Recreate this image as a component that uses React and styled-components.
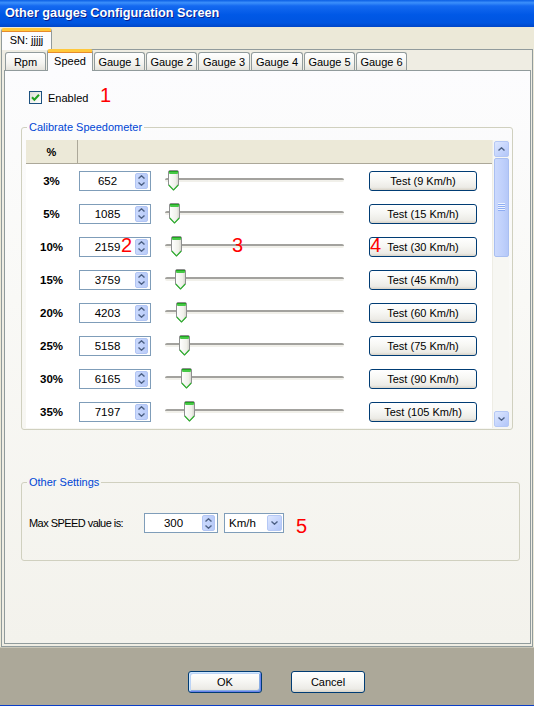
import React from "react";
import styled, { createGlobalStyle, css } from "styled-components";

const GlobalStyle = createGlobalStyle`
  html, body {
    margin: 0;
    padding: 0;
    background: #ECE9D8;
    overflow: hidden;
  }
  * { box-sizing: border-box; }
`;

const rows = [
  { pct: "3%", value: 652, speed: 9 },
  { pct: "5%", value: 1085, speed: 15 },
  { pct: "10%", value: 2159, speed: 30 },
  { pct: "15%", value: 3759, speed: 45 },
  { pct: "20%", value: 4203, speed: 60 },
  { pct: "25%", value: 5158, speed: 75 },
  { pct: "30%", value: 6165, speed: 90 },
  { pct: "35%", value: 7197, speed: 105 },
];

const tabs = [
  { label: "Rpm", width: 41 },
  { label: "Speed", width: 46, active: true },
  { label: "Gauge 1", width: 51 },
  { label: "Gauge 2", width: 51 },
  { label: "Gauge 3", width: 52 },
  { label: "Gauge 4", width: 52 },
  { label: "Gauge 5", width: 51 },
  { label: "Gauge 6", width: 51 },
];

const Chevron = ({ up, color = "#4D6185" }) => (
  <svg width="7" height="4" viewBox="0 0 7 4">
    <polyline
      points={up ? "0.5,3.5 3.5,0.8 6.5,3.5" : "0.5,0.5 3.5,3.2 6.5,0.5"}
      fill="none"
      stroke={color}
      strokeWidth="1.4"
    />
  </svg>
);

const Thumb = () => (
  <svg width="11" height="21" viewBox="0 0 11 21">
    <defs>
      <linearGradient id="tb" x1="0" x2="1" y1="0" y2="0">
        <stop offset="0" stopColor="#FFFFFF" />
        <stop offset="0.7" stopColor="#F0F0EA" />
        <stop offset="1" stopColor="#D4D3CC" />
      </linearGradient>
    </defs>
    <path
      d="M0.5 2 Q0.5 0.5 2 0.5 H9 Q10.5 0.5 10.5 2 V15 L5.5 20.2 L0.5 15 Z"
      fill="url(#tb)"
      stroke="#8E8F8F"
    />
    <path d="M0.8 15 L5.5 20 L10.2 15" fill="none" stroke="#2FB32F" strokeWidth="1.1" />
    <rect x="1" y="1" width="9" height="3" rx="1" fill="#47C947" />
    <rect x="1" y="1" width="9" height="1" fill="#21A121" />
  </svg>
);

const Check = () => (
  <svg width="9" height="9" viewBox="0 0 9 9">
    <polyline points="1,4.2 3.4,6.8 8,1.8" fill="none" stroke="#21A121" strokeWidth="2" />
  </svg>
);

const SpinBox = ({ value, width }) => (
  <SpinWrap $width={width}>
    <SpinValue>{value}</SpinValue>
    <SpinButtons>
      <SpinHalf><Chevron up /></SpinHalf>
      <SpinHalf><Chevron /></SpinHalf>
    </SpinButtons>
  </SpinWrap>
);

const Slider = ({ value }) => (
  <SliderBox>
    <Track />
    <ThumbHolder style={{ left: Math.round(1 + (value * 160) / 65535) }}>
      <Thumb />
    </ThumbHolder>
  </SliderBox>
);

export default function App() {
  return (
    <Window>
      <GlobalStyle />
      <TitleBar>Other gauges Configuration Screen</TitleBar>
      <Body>
        <TabRow $outer>
          <Tab $active $width={51}>SN: jjjjj</Tab>
        </TabRow>
        <OuterPanel>
          <TabRow>
            {tabs.map((t) => (
              <Tab key={t.label} $active={t.active} $width={t.width}>
                {t.label}
              </Tab>
            ))}
          </TabRow>
          <InnerPanel>
            <CheckRow>
              <CheckBox><Check /></CheckBox>
              <span>Enabled</span>
            </CheckRow>

            <Group $mt={17} $mr={17} $pad="6px 3px 1px 4px">
              <Legend>Calibrate Speedometer</Legend>
              <GridArea>
                <Table>
                  <HeaderRow>
                    <HeaderCell>%</HeaderCell>
                  </HeaderRow>
                  {rows.map((r) => (
                    <Row key={r.pct}>
                      <PctCell>{r.pct}</PctCell>
                      <SpinBox value={r.value} width={72} />
                      <Slider value={r.value} />
                      <XpButton $width={108}>Test ({r.speed} Km/h)</XpButton>
                    </Row>
                  ))}
                </Table>
                <ScrollBar>
                  <ScrollButton><Chevron up /></ScrollButton>
                  <ScrollThumb>
                    <Grip /><Grip /><Grip /><Grip />
                  </ScrollThumb>
                  <ScrollTrack />
                  <ScrollButton><Chevron /></ScrollButton>
                </ScrollBar>
              </GridArea>
            </Group>

            <Group $mt={46} $mr={10} $pad="24px 6px 27px 4px">
              <Legend>Other Settings</Legend>
              <SettingRow>
                <SettingLabel>Max SPEED value is:</SettingLabel>
                <SpinBox value={300} width={74} />
                <Combo>
                  <ComboText>Km/h</ComboText>
                  <ComboButton><Chevron /></ComboButton>
                </Combo>
              </SettingRow>
            </Group>
          </InnerPanel>
        </OuterPanel>
      </Body>
      <Footer>
        <XpButton $width={74} $default>OK</XpButton>
        <XpButton $width={74}>Cancel</XpButton>
      </Footer>

      <Marker $x={100} $y={85}>1</Marker>
      <Marker $x={121} $y={235}>2</Marker>
      <Marker $x={232} $y={235}>3</Marker>
      <Marker $x={370} $y={235}>4</Marker>
      <Marker $x={296} $y={516}>5</Marker>
    </Window>
  );
}

const Window = styled.div`
  position: relative;
  width: 534px;
  height: 706px;
  display: flex;
  flex-direction: column;
  background: #ECE9D8;
  font-family: "Liberation Sans", Arial, sans-serif;
  font-size: 11px;
  color: #000;
`;

const TitleBar = styled.div`
  height: 27px;
  flex-shrink: 0;
  display: flex;
  align-items: center;
  padding: 0 0 1px 5px;
  color: #fff;
  font-weight: bold;
  font-size: 12.7px;
  text-shadow: 1px 1px 0 #0A1E8C;
  background: linear-gradient(
    180deg,
    #0A5EE4 0%,
    #3B8FFB 10%,
    #1469F0 22%,
    #0058E6 55%,
    #0055E0 85%,
    #0046C8 100%
  );
`;

const Body = styled.div`
  flex: 1;
  display: flex;
  flex-direction: column;
  padding: 1px 1px 0 1px;
  min-height: 0;
`;

const TabRow = styled.div`
  display: flex;
  align-items: flex-end;
  gap: 1px;
  height: ${(p) => (p.$outer ? 21 : 20)}px;
  padding-left: ${(p) => (p.$outer ? 0 : 1)}px;
  flex-shrink: 0;
`;

const Tab = styled.div`
  position: relative;
  width: ${(p) => p.$width}px;
  height: 18px;
  display: flex;
  align-items: center;
  justify-content: center;
  border: 1px solid #919B9C;
  border-bottom: none;
  border-radius: 3px 3px 0 0;
  background: linear-gradient(180deg, #FFFFFF 0%, #F4F4F0 60%, #E4E3DC 100%);
  white-space: nowrap;
  ${(p) =>
    p.$active &&
    css`
      height: 22px;
      margin-bottom: -1px;
      z-index: 1;
      background: #FCFCFE;
      border-top: 3px solid #FFC83C;
      padding-bottom: 2px;
      box-shadow: inset 0 1px 0 #E68B2C;
    `}
`;

const OuterPanel = styled.div`
  flex: 1;
  display: flex;
  flex-direction: column;
  border: 1px solid #919B9C;
  padding: 0 1px 2px 2px;
  background: #EFEDE3;
  min-height: 0;
`;

const InnerPanel = styled.div`
  flex: 1;
  display: flex;
  flex-direction: column;
  border: 1px solid #919B9C;
  background: linear-gradient(180deg, #FCFCFE 0%, #F9F9F6 40%, #F3F2EC 100%);
  min-height: 0;
`;

const CheckRow = styled.label`
  display: flex;
  align-items: center;
  gap: 6px;
  height: 13px;
  margin: 20px 0 0 24px;
`;

const CheckBox = styled.span`
  width: 13px;
  height: 13px;
  display: flex;
  align-items: center;
  justify-content: center;
  border: 1px solid #1C5180;
  background: linear-gradient(135deg, #DCDCD7 0%, #F4F4F0 60%, #FFFFFF 100%);
`;

const Group = styled.fieldset`
  margin: ${(p) => p.$mt}px ${(p) => p.$mr}px 0 16px;
  padding: ${(p) => p.$pad};
  border: 1px solid #D0D0BF;
  border-radius: 3px;
  min-width: 0;
`;

const Legend = styled.legend`
  padding: 0 2px;
  margin-left: 1px;
  color: #0046D5;
  line-height: 13px;
`;

const GridArea = styled.div`
  display: flex;
  height: 288px;
  background: #fff;
`;

const Table = styled.div`
  flex: 1;
  display: flex;
  flex-direction: column;
`;

const HeaderRow = styled.div`
  height: 24px;
  flex-shrink: 0;
  display: flex;
  background: #ECE9D8;
  border-bottom: 1px solid #ACA899;
`;

const HeaderCell = styled.div`
  width: 52px;
  display: flex;
  align-items: center;
  justify-content: center;
  border-right: 1px solid #ACA899;
  font-weight: bold;
`;

const Row = styled.div`
  height: 33px;
  flex-shrink: 0;
  display: flex;
  align-items: center;
`;

const PctCell = styled.div`
  width: 51px;
  text-align: center;
  font-weight: bold;
  font-size: 11.5px;
`;

const SpinWrap = styled.div`
  width: ${(p) => p.$width}px;
  height: 20px;
  margin-left: 2px;
  display: flex;
  border: 1px solid #7F9DB9;
  background: #fff;
`;

const SpinValue = styled.div`
  flex: 1;
  text-align: center;
  line-height: 18px;
  font-size: 11.5px;
`;

const SpinButtons = styled.div`
  width: 13px;
  margin: 1px 2px 1px 0;
  display: flex;
  flex-direction: column;
  border-radius: 2px;
  overflow: hidden;
  background: linear-gradient(90deg, #CAD9FD 0%, #B9CBF8 100%);
  border: 1px solid #B2C5F3;
`;

const SpinHalf = styled.div`
  flex: 1;
  display: flex;
  align-items: center;
  justify-content: center;
`;

const SliderBox = styled.div`
  position: relative;
  width: 179px;
  height: 21px;
  margin-left: 14px;
  display: flex;
  align-items: center;
`;

const Track = styled.div`
  width: 100%;
  height: 4px;
  margin-top: -2px;
  border-top: 2px solid #A3A29E;
  border-radius: 2px;
  background: #F1F0EA;
  box-shadow: 0 1px 0 #fff;
`;

const ThumbHolder = styled.div`
  position: absolute;
  top: 0;
  height: 21px;
  line-height: 0;
`;

const XpButton = styled.button`
  width: ${(p) => p.$width}px;
  height: ${(p) => (p.$width > 100 ? 20 : 22)}px;
  margin-left: ${(p) => (p.$width > 100 ? 25 : 0)}px;
  padding: 0;
  border: 1px solid #003C74;
  border-radius: 3px;
  font-family: "Liberation Sans", Arial, sans-serif;
  font-size: 11px;
  color: #000;
  background: linear-gradient(180deg, #FFFFFF 0%, #F7F7F4 45%, #ECEBE6 85%, #D8D3C8 100%);
  white-space: nowrap;
  ${(p) =>
    p.$default &&
    css`
      box-shadow: inset 1px 1px 0 #CEE7FF, inset -1px -1px 0 #6982EE, inset 2px 2px 0 #BCD4F6, inset -2px -2px 0 #89ADE4;
    `}
`;

const ScrollBar = styled.div`
  width: 17px;
  display: flex;
  flex-direction: column;
  align-items: center;
  padding: 1px 0;
  background: #F7F7F3;
  border-left: 1px solid #EEEDE5;
`;

const ScrollButton = styled.div`
  width: 15px;
  height: 16px;
  flex-shrink: 0;
  display: flex;
  align-items: center;
  justify-content: center;
  border: 1px solid #B5C8F5;
  border-radius: 2px;
  background: linear-gradient(135deg, #DDE7FE 0%, #C3D3FC 60%, #B2C6F8 100%);
`;

const ScrollThumb = styled.div`
  width: 15px;
  height: 99px;
  margin-top: 1px;
  flex-shrink: 0;
  display: flex;
  flex-direction: column;
  align-items: center;
  justify-content: center;
  gap: 1px;
  border: 1px solid #A9BFF1;
  border-radius: 2px;
  background: linear-gradient(90deg, #CBD9FD 0%, #BFD0FB 60%, #B5C8F8 100%);
`;

const Grip = styled.div`
  width: 7px;
  height: 1px;
  background: #8EADF4;
  box-shadow: 0 -1px 0 #EEF4FE;
`;

const ScrollTrack = styled.div`
  flex: 1;
`;

const SettingRow = styled.div`
  display: flex;
  align-items: center;
  height: 20px;
  padding-left: 3px;
`;

const SettingLabel = styled.span`
  width: 113px;
  letter-spacing: -0.55px;
`;

const Combo = styled.div`
  width: 60px;
  height: 20px;
  margin-left: 6px;
  display: flex;
  border: 1px solid #7F9DB9;
  background: #fff;
`;

const ComboText = styled.div`
  flex: 1;
  padding-left: 4px;
  line-height: 18px;
  font-size: 11.5px;
`;

const ComboButton = styled.div`
  width: 15px;
  margin: 1px;
  display: flex;
  align-items: center;
  justify-content: center;
  border: 1px solid #B5C8F5;
  border-radius: 2px;
  background: linear-gradient(135deg, #DDE7FE 0%, #C3D3FC 60%, #B2C6F8 100%);
`;

const Footer = styled.div`
  height: 59px;
  flex-shrink: 0;
  display: flex;
  align-items: flex-start;
  gap: 29px;
  padding: 23px 0 0 188px;
  background: #ACA899;
  border-top: 1px solid #C9C6B8;
  border-bottom: 1px solid #0A3EC8;
`;

const Marker = styled.span`
  position: absolute;
  left: ${(p) => p.$x}px;
  top: ${(p) => p.$y}px;
  font-family: "Liberation Sans", Arial, sans-serif;
  font-size: 20px;
  line-height: 20px;
  color: #FF0000;
  pointer-events: none;
`;
